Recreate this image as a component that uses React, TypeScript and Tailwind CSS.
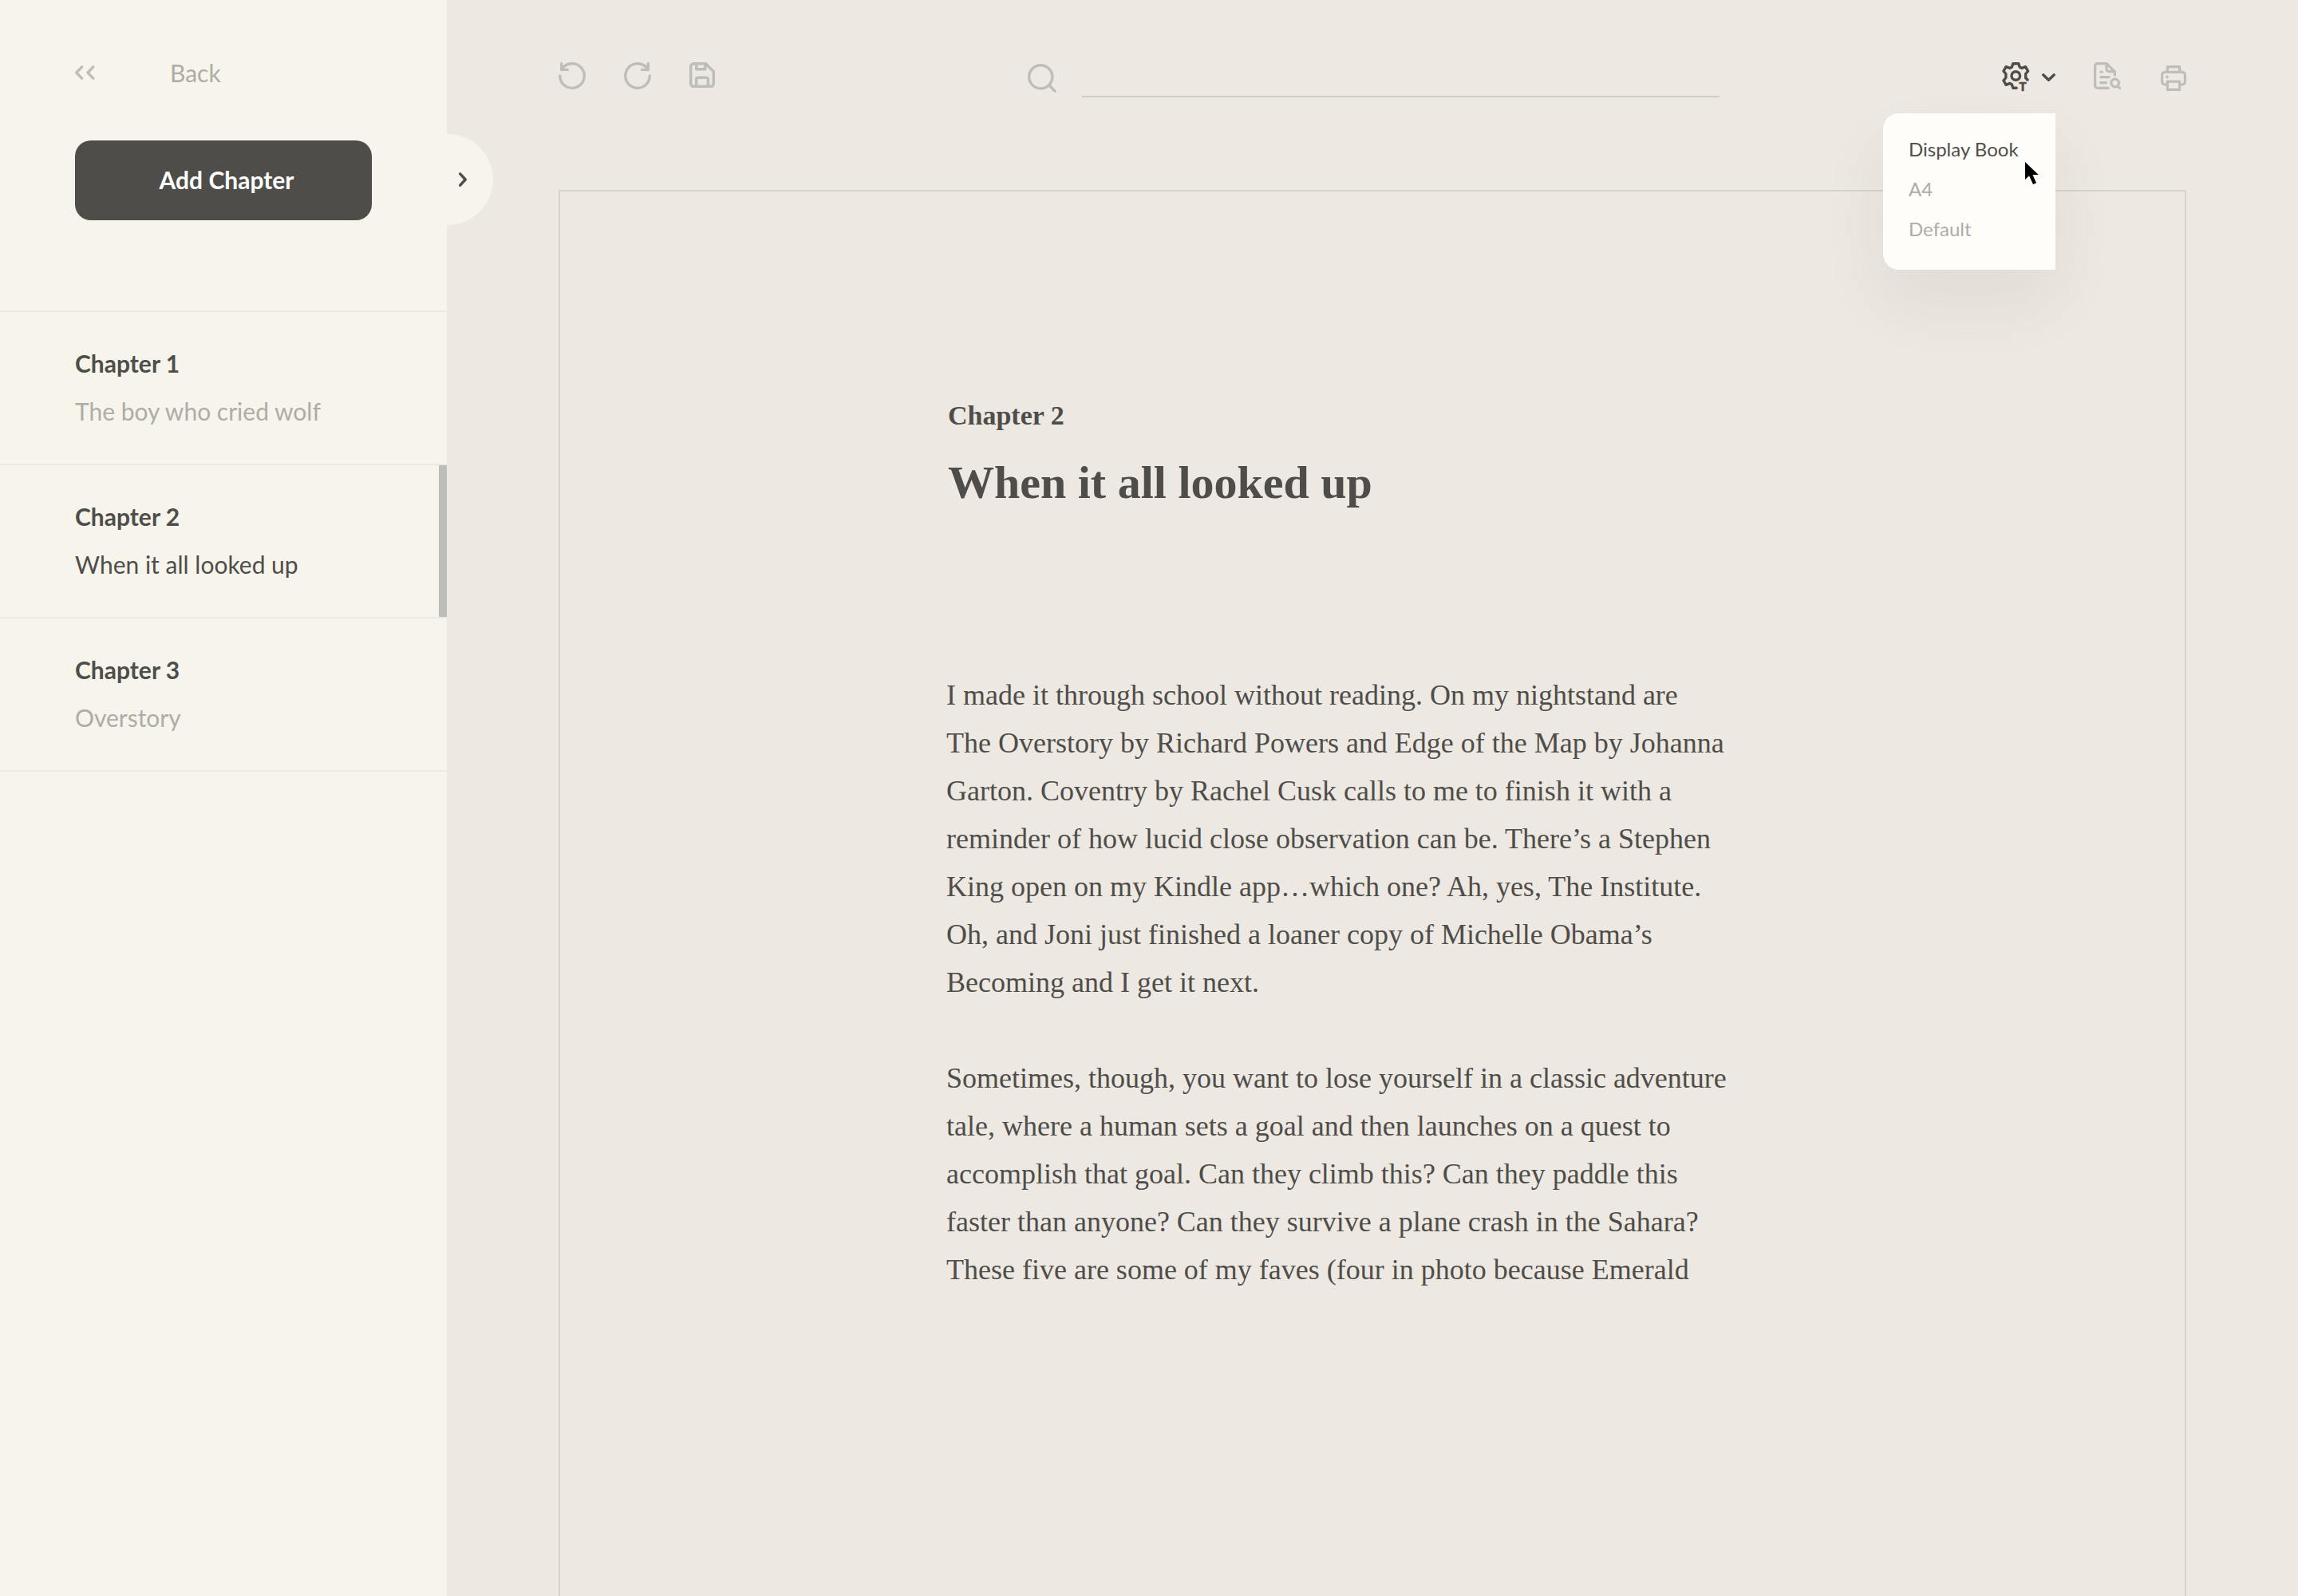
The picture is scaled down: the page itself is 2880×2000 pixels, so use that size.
import type { ReactNode } from "react";

const chapters = [
  { name: "Chapter 1", title: "The boy who cried wolf", active: false },
  { name: "Chapter 2", title: "When it all looked up", active: true },
  { name: "Chapter 3", title: "Overstory", active: false },
];

const firstParagraph = [
  "I made it through school without reading. On my nightstand are",
  "The Overstory by Richard Powers and Edge of the Map by Johanna",
  "Garton. Coventry by Rachel Cusk calls to me to finish it with a",
  "reminder of how lucid close observation can be. There’s a Stephen",
  "King open on my Kindle app…which one? Ah, yes, The Institute.",
  "Oh, and Joni just finished a loaner copy of Michelle Obama’s",
  "Becoming and I get it next.",
];

const secondParagraph = [
  "Sometimes, though, you want to lose yourself in a classic adventure",
  "tale, where a human sets a goal and then launches on a quest to",
  "accomplish that goal. Can they climb this? Can they paddle this",
  "faster than anyone? Can they survive a plane crash in the Sahara?",
  "These five are some of my faves (four in photo because Emerald",
];

function Icon({ w, h, children }: { w: number; h: number; children: ReactNode }) {
  return (
    <svg
      width={w}
      height={h}
      viewBox={`0 0 ${w} ${h}`}
      fill="none"
      stroke="currentColor"
      strokeWidth="3.4"
      strokeLinecap="round"
      strokeLinejoin="round"
      className="block shrink-0 overflow-visible"
      aria-hidden="true"
    >
      {children}
    </svg>
  );
}

function Lines({ lines }: { lines: string[] }) {
  return (
    <p className="whitespace-nowrap">
      {lines.map((line) => (
        <span key={line} className="block">
          {line}
        </span>
      ))}
    </p>
  );
}

function Sidebar() {
  return (
    <aside className="w-[560px] shrink-0 bg-[#f7f4ec]">
      <a href="#back" className="ml-[94px] mt-[73px] flex w-fit items-center gap-[94px] text-[30px] leading-9 text-[#aeaca6]">
        <span className="text-[#bebeb8]">
          <Icon w={25} h={18}>
            <path d="M8.6 1.8 1.8 9l6.8 7.2M22.8 1.8 16 9l6.8 7.2" />
          </Icon>
        </span>
        Back
      </a>
      <div className="relative mt-[67px] px-[94px]">
        <button className="h-[100px] w-full rounded-[20px] bg-[#4e4d4a] pb-0.5 pl-2 text-[30px] font-bold leading-9 text-white">
          Add Chapter
        </button>
        <button
          aria-label="Expand sidebar"
          className="absolute -top-2 left-full flex h-[114px] w-[58px] items-center rounded-r-full bg-[#f7f4ec] pl-[15px] text-[#4e4d4a]"
        >
          <Icon w={10} h={18}>
            <path d="M1.7 1.8 8.3 9l-6.6 7.2" />
          </Icon>
        </button>
      </div>
      <ul className="mt-[113px] border-t-2 border-[#ece9e1]">
        {chapters.map((c) => (
          <li key={c.name} className="border-b-2 border-[#ece9e1]">
            <a
              href="#chapter"
              aria-current={c.active ? "page" : undefined}
              className={
                c.active
                  ? "block border-r-[10px] border-[#bebeb8] pb-9 pl-[94px] pt-[34px] text-[30px] leading-[60px] text-[#4e4d4a]"
                  : "block pb-9 pl-[94px] pt-[34px] text-[30px] leading-[60px] text-[#aeaca6]"
              }
            >
              <span className="block font-bold text-[#4e4d4a]">{c.name}</span>
              <span className="block">{c.title}</span>
            </a>
          </li>
        ))}
      </ul>
    </aside>
  );
}

function DisplayMenu() {
  return (
    <div
      role="menu"
      className="absolute right-0 top-16 flex w-[216px] flex-col rounded-l-[20px] bg-[#fefdf9] pb-[26px] pl-8 pt-5 text-2xl text-[#aeaca6] shadow-[0_40px_80px_rgba(78,77,74,0.08)]"
    >
      <button role="menuitem" className="h-[50px] text-left text-[#4e4d4a]">
        Display Book
      </button>
      <button role="menuitem" className="h-[50px] text-left">
        A4
      </button>
      <button role="menuitem" className="h-[50px] text-left">
        Default
      </button>
      <svg
        width="18"
        height="29"
        viewBox="0 0 18 29"
        className="absolute left-[178px] top-[61px] overflow-visible"
        aria-hidden="true"
      >
        <path
          d="M0 0V22L5 17.2L10 28L14 26.3L9.5 16H16.8Z"
          fill="#000"
          stroke="#fff"
          strokeWidth="2"
          paintOrder="stroke"
        />
      </svg>
    </div>
  );
}

function Toolbar() {
  return (
    <header className="flex items-start pb-[116px] pt-[78px] text-[#bebeb8]">
      <div className="flex w-[588px] shrink-0 items-start gap-12">
        <button aria-label="Undo">
          <Icon w={34} h={34}>
            <path d="M3.7 1.7V9.4H11.4M3.7 9.4A15.3 15.3 0 1 1 1.7 17" />
          </Icon>
        </button>
        <button aria-label="Redo">
          <Icon w={34} h={34}>
            <path d="M30.3 1.7V9.4H22.6M30.3 9.4A15.3 15.3 0 1 0 32.3 17" />
          </Icon>
        </button>
        <button aria-label="Save">
          <Icon w={32} h={32}>
            <path d="M5.2 1.7H20.4L30.3 11.6V26.8a3.5 3.5 0 0 1-3.5 3.5H5.2a3.5 3.5 0 0 1-3.5-3.5V5.2a3.5 3.5 0 0 1 3.5-3.5ZM8.7 2V8.8H19.8V2M8.7 30V21.6a2.4 2.4 0 0 1 2.4-2.4H21a2.4 2.4 0 0 1 2.4 2.4V30" />
          </Icon>
        </button>
      </div>
      <label className="flex flex-1 items-start">
        <span className="mt-0.5 w-[68px] shrink-0">
          <Icon w={36} h={36}>
            <circle cx="16.3" cy="16.3" r="14.6" />
            <path d="m27 27 7.2 7.2" />
          </Icon>
        </span>
        <input
          type="text"
          aria-label="Search"
          className="h-11 min-w-0 flex-1 border-b-2 border-[#cfcdc6] bg-transparent text-2xl text-[#4e4d4a] outline-none"
        />
      </label>
      <div className="flex w-[585px] shrink-0 items-start justify-end">
        <div className="relative mr-12 text-[#4e4d4a]">
          <button aria-label="Display settings" aria-haspopup="menu" aria-expanded="true" className="flex items-start gap-4">
            <Icon w={34} h={36}>
              <path d="M18.2 32.3H13.8L12.4 27.8L9.8 26.4L5.1 28.3L2 22.8L4.9 19.5V14.5L2 11.2L5.1 5.7L9.8 7.4L12.4 6L13.8 1.7H20.8L22.2 6L24.8 7.4L29.5 5.7L32.6 11.2L29.7 14.5V19.5L32 22" />
              <circle cx="17.3" cy="17" r="5.3" />
              <text
                x="26"
                y="36"
                fontSize="15"
                fontWeight="900"
                fontFamily="Lato, sans-serif"
                textAnchor="middle"
                fill="currentColor"
                strokeWidth="0.6"
              >
                T
              </text>
            </Icon>
            <span className="mt-3.5">
              <Icon w={17} h={10}>
                <path d="M1.7 1.8 8.5 8.2l6.8-6.4" />
              </Icon>
            </span>
          </button>
          <DisplayMenu />
        </div>
        <button aria-label="Preview document" className="mr-[50px]">
          <Icon w={34} h={34}>
            <g strokeWidth="3.2">
              <path d="M18.2 32.4H5A3.4 3.4 0 0 1 1.6 29V5A3.4 3.4 0 0 1 5 1.6H16L26.4 12V16M16 2V8.6a3 3 0 0 0 3 3H26M8.8 12H10.4M8.8 18.7H19.2M8.8 25.6H15.4" />
              <circle cx="26.7" cy="26" r="4.8" />
              <path d="m30.4 30.4 2.2 2.2" />
            </g>
          </Icon>
        </button>
        <button aria-label="Print" className="mt-1">
          <Icon w={32} h={32}>
            <g strokeWidth="3.2">
              <path d="M8.4 8V1.6H23.6V8M8.4 23.8H5a3.4 3.4 0 0 1-3.4-3.4V11.8A3.4 3.4 0 0 1 5 8.4H27a3.4 3.4 0 0 1 3.4 3.4V20.4a3.4 3.4 0 0 1-3.4 3.4H23.6M8.4 20.2H23.6V30.4H8.4Z" />
              <circle cx="8" cy="14.4" r="1.8" fill="currentColor" stroke="none" />
            </g>
          </Icon>
        </button>
      </div>
    </header>
  );
}

export default function App() {
  return (
    <div className="flex min-h-screen bg-[#ede8e1] font-['Lato',sans-serif] text-[#4e4d4a]">
      <Sidebar />
      <main className="flex min-w-0 flex-1 flex-col px-[140px]">
        <Toolbar />
        <article className="flex-1 border-2 border-b-0 border-[#d6d4cc] pl-[484px] pt-[257px] font-['Liberation_Serif',serif]">
          <header className="pl-0.5 font-bold">
            <h2 className="text-[34px] leading-[48px]">Chapter 2</h2>
            <h1 className="mt-6 text-[58px] leading-[72px]">When it all looked up</h1>
          </header>
          <div className="mt-[200px] flex flex-col gap-[60px] text-4xl leading-[60px]">
            <Lines lines={firstParagraph} />
            <Lines lines={secondParagraph} />
          </div>
        </article>
      </main>
    </div>
  );
}
